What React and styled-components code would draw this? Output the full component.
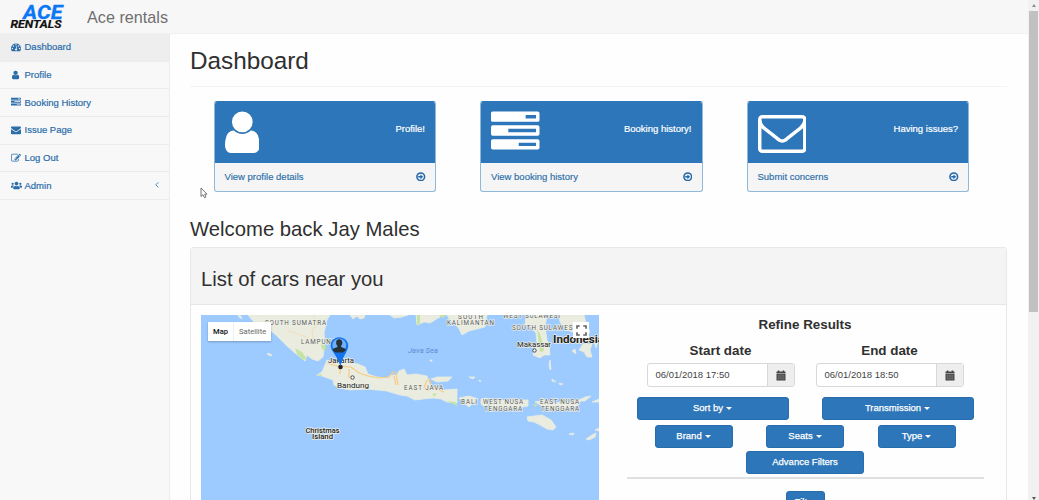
import React from "react";
import styled, { createGlobalStyle } from "styled-components";
import { FaUsers } from "react-icons/fa";

const Global = createGlobalStyle`
  * { box-sizing: border-box; }
  html, body { margin: 0; height: 100%; overflow: hidden; background: #fefefe; }
  body { font-family: "Liberation Sans", Arial, sans-serif; font-size: 9.5px; color: #333; }
  h1, h2, h3, h4, p { margin: 0; font-weight: 400; }
`;

const Window = styled.div`
  display: flex;
  width: 1039px;
  height: 500px;
  overflow: hidden;
`;
const Page = styled.div`
  flex: 1;
  min-width: 0;
  display: flex;
  flex-direction: column;
`;
const TopBar = styled.header`
  height: 34px;
  flex: none;
  display: flex;
  align-items: center;
  background: #f7f7f7;
  border-bottom: 1px solid #f1f1f1;
  padding-left: 10px;
`;
const Brand = styled.span`
  margin-left: 22px;
  font-size: 16.2px;
  line-height: 18px;
  color: #6f6f6f;
`;
const Body = styled.div`
  flex: 1;
  min-height: 0;
  display: flex;
`;
const Sidebar = styled.nav`
  width: 170px;
  flex: none;
  background: #f8f8f8;
  border-right: 1px solid #ececec;
`;
const NavItem = styled.a`
  display: flex;
  align-items: center;
  height: 27.7px;
  padding: 0 10px 1px 10.5px;
  border-bottom: 1px solid #ececec;
  background: ${(p) => (p.$active ? "#eee" : "transparent")};
  color: #2a6da9;
  -webkit-text-stroke: 0.2px #2a6da9;
`;
const NavIcon = styled.span`
  display: flex;
  justify-content: center;
  width: 11px;
  margin-right: 3px;
`;
const NavLabel = styled.span`
  flex: 1;
`;
const Main = styled.main`
  flex: 1;
  min-width: 0;
  padding: 0 21px 0 20px;
  background: #fefefe;
`;
const PageTitle = styled.h1`
  height: 53px;
  padding-top: 13px;
  border-bottom: 1px solid #f3f3f3;
  font-size: 24.3px;
  line-height: 28px;
  color: #303030;
`;
const Cards = styled.section`
  display: flex;
  gap: 44px;
  padding: 14px 0 0 23.5px;
`;
const Card = styled.article`
  width: 222.5px;
  height: 91px;
  border: 1px solid #8fb9da;
  border-top-color: #2d76b9;
  border-radius: 3px;
  overflow: hidden;
  background: #f5f5f5;
`;
const CardTop = styled.div`
  height: 61px;
  display: flex;
  justify-content: space-between;
  padding: 5.5px 10px 0;
  background: #2d76b9;
  color: #fff;
  -webkit-text-stroke: 0.2px #fff;
`;
const CardCaption = styled.span`
  padding-top: 15px;
  line-height: 12px;
`;
const CardLink = styled.a`
  display: flex;
  align-items: center;
  justify-content: space-between;
  height: 27px;
  padding: 0 9.5px 0 10px;
  color: #2a6da9;
  -webkit-text-stroke: 0.15px #2a6da9;
`;
const Welcome = styled.h2`
  padding-top: 25px;
  height: 55px;
  font-size: 20.3px;
  line-height: 24px;
  color: #303030;
`;
const Panel = styled.section`
  height: 300px;
  border: 1px solid #e8e8e8;
  border-radius: 3px 3px 0 0;
  background: #fefefe;
`;
const PanelHead = styled.div`
  height: 57px;
  padding: 19px 10px 0;
  background: #f4f4f4;
  border-bottom: 1px solid #e6e6e6;
`;
const PanelTitle = styled.h3`
  font-size: 20.3px;
  line-height: 24px;
  color: #303030;
`;
const PanelBody = styled.div`
  display: flex;
  padding: 10px 22px 0 10px;
`;
const MapFrame = styled.div`
  position: relative;
  width: 398px;
  height: 200px;
  flex: none;
  overflow: hidden;
`;
const MapTypes = styled.div`
  position: absolute;
  left: 7px;
  top: 7px;
  height: 19px;
  display: flex;
  align-items: center;
  background: #fff;
  box-shadow: 0 1px 2px rgba(0, 0, 0, 0.25);
  font-family: Roboto, sans-serif;
  font-size: 7.6px;
`;
const MapType = styled.span`
  padding: 4px 5px;
  line-height: 11px;
  color: ${(p) => (p.$on ? "#111" : "#666")};
  font-weight: ${(p) => (p.$on ? 500 : 400)};
  & + & { border-left: 1px solid #eee; }
`;
const FullScreen = styled.div`
  position: absolute;
  left: 372px;
  top: 7px;
  width: 16px;
  height: 16px;
  display: flex;
  align-items: center;
  justify-content: center;
  background: #fff;
`;
const Filters = styled.div`
  width: 357px;
  margin-left: 27.5px;
  display: flex;
  flex-direction: column;
`;
const FilterTitle = styled.h4`
  margin-top: 2px;
  text-align: center;
  font-size: 13.4px;
  line-height: 16px;
  font-weight: 700;
  color: #303030;
`;
const DateRow = styled.div`
  display: flex;
  gap: 21px;
  padding: 8px 0 0 20px;
`;
const DateField = styled.div`
  width: 148px;
`;
const DateInput = styled.div`
  display: flex;
  height: 24px;
  margin-top: 4px;
  border: 1px solid #d8d8d8;
  border-radius: 3px;
  background: #fff;
`;
const DateValue = styled.span`
  flex: 1;
  padding-left: 8px;
  line-height: 21px;
  font-size: 9.5px;
  color: #444;
`;
const DateAddon = styled.span`
  width: 27px;
  display: flex;
  align-items: center;
  justify-content: center;
  background: #eee;
  border-left: 1px solid #d8d8d8;
`;
const ButtonRow = styled.div`
  display: flex;
  justify-content: center;
  gap: ${(p) => p.$gap || 0}px;
  margin-top: ${(p) => p.$top}px;
`;
const Button = styled.button`
  width: ${(p) => p.$w}px;
  height: 23px;
  display: flex;
  align-items: center;
  justify-content: center;
  gap: 3px;
  padding: 0 0 2px;
  border: 1px solid #276cab;
  border-radius: 3px;
  background: #2d76b9;
  color: #fff;
  font: 9.5px "Liberation Sans", Arial, sans-serif;
  -webkit-text-stroke: 0.25px #fff;
`;
const Caret = styled.i`
  border: 3px solid transparent;
  border-top-color: #fff;
  border-bottom: 0;
  margin-top: 2px;
`;
const Rule = styled.div`
  height: 2px;
  margin: 3px 0 12px;
  background: #e0e0e0;
`;
const ScrollTrack = styled.div`
  width: 11px;
  flex: none;
  display: flex;
  flex-direction: column;
  align-items: center;
  background: #f1f1f1;
`;
const ScrollThumb = styled.div`
  width: 9px;
  height: 301px;
  margin: 4px 0 185px;
  background: #c1c1c1;
`;
const ScrollArrow = styled.i`
  border: 2.5px solid transparent;
  ${(p) => (p.$up ? "border-bottom: 3px solid #8b8b8b; border-top: 0; margin-top: 4px;" : "border-top: 3px solid #555; border-bottom: 0;")}
`;
const Pointer = styled.svg`
  position: absolute;
  left: 200px;
  top: 187px;
`;

const PATHS = {
  gauge: "M384 1152q0-53-37.5-90.5t-90.5-37.5-90.5 37.5-37.5 90.5 37.5 90.5 90.5 37.5 90.5-37.5 37.5-90.5zm192-448q0-53-37.5-90.5t-90.5-37.5-90.5 37.5-37.5 90.5 37.5 90.5 90.5 37.5 90.5-37.5 37.5-90.5zm428 481l101-382q6-26-7.5-48.5t-38.5-29.5-48 6.5-30 39.5l-101 382q-60 5-107 43.5t-63 98.5q-20 77 20 146t117 89 146-20 89-117q16-60-6-117t-72-91zm660-33q0-53-37.5-90.5t-90.5-37.5-90.5 37.5-37.5 90.5 37.5 90.5 90.5 37.5 90.5-37.5 37.5-90.5zm-640-640q0-53-37.5-90.5t-90.5-37.5-90.5 37.5-37.5 90.5 37.5 90.5 90.5 37.5 90.5-37.5 37.5-90.5zm448 192q0-53-37.5-90.5t-90.5-37.5-90.5 37.5-37.5 90.5 37.5 90.5 90.5 37.5 90.5-37.5 37.5-90.5zm320 448q0 261-141 483-19 29-54 29h-1402q-35 0-54-29-141-221-141-483 0-182 71-348t191-286 286-191 348-71 348 71 286 191 191 286 71 348z",
  user: "M1280 1399q0 109-62.5 187t-150.5 78h-854q-88 0-150.5-78t-62.5-187q0-85 8.5-160.5t31.5-152 58.5-131 94-89 134.5-34.5q131 128 313 128t313-128q76 0 134.5 34.5t94 89 58.5 131 31.5 152 8.5 160.5zm-256-887q0 159-112.5 271.5t-271.5 112.5-271.5-112.5-112.5-271.5 112.5-271.5 271.5-112.5 271.5 112.5 112.5 271.5z",
  tasks: "M64 128h1664q64 0 64 64v256q0 64-64 64H64q-64 0-64-64V192q0-64 64-64zM1280 256v128h384V256zM64 640h1664q64 0 64 64v256q0 64-64 64H64q-64 0-64-64V704q0-64 64-64zM640 768v128h1024V768zM64 1152h1664q64 0 64 64v256q0 64-64 64H64q-64 0-64-64v-256q0-64 64-64zM1024 1280v128h640v-128z",
  mail: "M1792 710v794q0 66-47 113t-113 47h-1472q-66 0-113-47t-47-113v-794q44 49 101 87 362 246 497 345 57 42 92.5 65.5t94.5 48 110 24.5h2q51 0 110-24.5t94.5-48 92.5-65.5q170-123 498-345 57-39 100-87zm0-294q0 79-49 151t-122 123q-376 261-468 325-10 7-42.5 31t-54 38.5-52 32.5-57.5 27-50 9h-2q-23 0-50-9t-57.5-27-52-32.5-54-38.5-42.5-31q-91-64-262-182.5t-205-142.5q-62-42-117-115.5t-55-136.5q0-78 41.5-130t118.5-52h1472q65 0 112.5 47t47.5 113z",
  mailOpen: "M1664 1504v-768q-32 36-69 66-268 206-426 338-51 43-83 67t-86.5 48.5-102.5 24.5h-2q-48 0-102.5-24.5t-86.5-48.5-83-67q-158-132-426-338-37-30-69-66v768q0 13 9.5 22.5t22.5 9.5h1472q13 0 22.5-9.5t9.5-22.5zm0-1051v-24.5l-.5-13-3-12.5-5.5-9-9-7.5-14-2.5h-1472q-13 0-22.5 9.5t-9.5 22.5q0 168 147 284 193 152 401 317 6 5 35 29.5t46 37.5 44.5 31.5 50.5 27.5 43 9h2q20 0 43-9t50.5-27.5 44.5-31.5 46-37.5 35-29.5q208-165 401-317 54-43 100.5-115.5t46.5-131.5zm128-37v1088q0 66-47 113t-113 47h-1472q-66 0-113-47t-47-113v-1088q0-66 47-113t113-47h1472q66 0 113 47t47 113z",
  edit: "M888 1184l116-116-152-152-116 116v56h96v96h56zm440-720q-16-16-33 1l-350 350q-17 17-1 33t33-1l350-350q17-17 1-33zm80 594v190q0 119-84.5 203.5t-203.5 84.5h-832q-119 0-203.5-84.5t-84.5-203.5v-832q0-119 84.5-203.5t203.5-84.5h832q63 0 117 25 15 7 18 23 3 17-9 29l-49 49q-14 14-32 8-23-6-45-6h-832q-66 0-113 47t-47 113v832q0 66 47 113t113 47h832q66 0 113-47t47-113v-126q0-13 9-22l64-64q15-15 35-7t20 29zm-96-738l288 288-672 672h-288v-288zm444 132l-92 92-288-288 92-92q28-28 68-28t68 28l152 152q28 28 28 68t-28 68z",
};

const Icon = ({ name, size }) => {
  const w = name === "user" ? 1280 : 1792;
  return (
    <svg width={(size * w) / 1792} height={size} viewBox={`0 0 ${w} 1792`} fill="currentColor" fillRule="evenodd">
      <path d={PATHS[name]} />
    </svg>
  );
};

const ArrowCircle = () => (
  <svg width="9.5" height="9.5" viewBox="0 0 18 18" fill="none" stroke="#2468a8">
    <circle cx="9" cy="9" r="7.3" strokeWidth="2.9" />
    <path d="M4.2 9h5.3" strokeWidth="3.2" />
    <path d="M8.3 4.5L13.6 9l-5.3 4.5z" fill="#2468a8" stroke="none" />
  </svg>
);

const Calendar = () => (
  <svg width="10" height="11" viewBox="0 0 10 11">
    <path d="M.5 1.5h1.3V.4h1.6v1.1h3.2V.4h1.6v1.1h1.3v2H.5zM.5 4h9v6.5h-9z" fill="#444" />
    <path d="M.5 6h9M.5 8.2h9M2.9 4v6.5M5 4v6.5M7.1 4v6.5" stroke="#999" strokeWidth=".4" />
  </svg>
);

const Logo = () => (
  <svg width="55" height="30" viewBox="0 0 55 30" overflow="visible" fontFamily="Roboto, sans-serif" fontWeight="700" fontStyle="italic">
    <text x="13" y="17" fontSize="20" fill="#0a78f5" stroke="#0a78f5" strokeWidth=".3" textLength="39.5" lengthAdjust="spacingAndGlyphs">ACE</text>
    <text x="0.5" y="26.2" fontSize="11.2" fill="#111" stroke="#111" strokeWidth=".2" textLength="51" lengthAdjust="spacingAndGlyphs">RENTALS</text>
  </svg>
);

const LAND = [
  "M47 0L52 6 57 11 69 15 76 21 86 31 94 38 104 46 106 40 111 44 117 46 122 42 123 35 124 28 123 18 126 5 129 0z",
  "M116 60L121 57 126 45 132 47 137 46 141 42 149 48 157 49 164 52 167 59 176 62 186 63 190 60 196 60 198 56 203 54 206 60 215 59 226 61 228 68 231 72 242 75 256 74 256 88 246 87 240 84 232 83 222 84 214 85 206 81 199 80 189 77 186 76 176 75 166 74 149 75 139 73 133 70 132 65 121 61z",
  "M230 64L236 62 251 62 247 66 236 67z",
  "M258 83L268 81 277 84 272 88 268 92 263 88z",
  "M280 84L286 83 288 88 284 92 280 89z",
  "M289 88L296 84 305 86 312 84 320 85 327 85 327 91 317 93 308 92 298 94 290 92z",
  "M334 87L343 85 352 88 361 87 370 87 378 85 382 83 376 91 366 93 354 94 343 92z",
  "M378 86L384 82 390 81 384 86zM391 87L398 84 398 87z",
  "M326 102L333 101 341 100 350 105 355 112 352 115 346 114 339 110 333 107 327 106z",
  "M385 124L391 120 395 118 394 122 388 125zM394 115L398 113 398 116zM368 119L373 118 372 120z",
  "M246 0L250 7 257 12 261 20 268 16 284 12 286 0z",
  "M215 0L216 10 223 7 229 8 239 2 239 0zM189 0L193 3 201 2 207 0z",
  "M325 0L324 10 330 12 335 18 336 28 333 35 332 40 339 43 343 40 349 40 348 31 346 25 344 12 346 0z",
  "M358 0L359 7 366 15 372 17 375 25 381 27 389 17 385 8 383 0z",
  "M378 35L382 29 391 29 389 35 391 42 386 42 383 37zM371 36l3-2 1 5zM393 26l4-1-2 8z",
  "M349 45l1 9-1 1-1-5zM351 64l4 3-4-1zM268 62l6 0-2 2zM278 65l2 1-1 1zM229 45h2v1h-2zM358 68l4 1-3 1zM67 38l4 2-1 1-4-2zM37 0l3 1 1 3-3-2zM149 0l3 4 4-3 3 3 4-1 1-3z",
];

const LABELS = [
  { x: 64, y: 9.3, t: "SOUTH SUMATRA", w: 61, s: 6.3 },
  { x: 100, y: 28.3, t: "LAMPUNG", w: 35, s: 6.3 },
  { x: 203, y: 74.4, t: "EAST JAVA", w: 39, s: 6.3 },
  { x: 257, y: 3, t: "SOUTH", w: 25, s: 6.3 },
  { x: 246, y: 9.2, t: "KALIMANTAN", w: 47, s: 6.3 },
  { x: 302, y: 2.6, t: "WEST SULAWESI", w: 57, s: 6.3 },
  { x: 311, y: 14.7, t: "SOUTH SULAWESI", w: 63, s: 6.3 },
  { x: 260, y: 88, t: "BALI", w: 16, s: 6.3 },
  { x: 282, y: 88.5, t: "WEST NUSA", w: 40, s: 6.3 },
  { x: 283, y: 95, t: "TENGGARA", w: 38, s: 6.3 },
  { x: 339, y: 88.5, t: "EAST NUSA", w: 39, s: 6.3 },
  { x: 340, y: 95, t: "TENGGARA", w: 38, s: 6.3 },
  { x: 127, y: 47.2, t: "Jakarta", w: 26, s: 7.8, c: "#222" },
  { x: 136, y: 72.3, t: "Bandung", w: 32, s: 7.8, c: "#222" },
  { x: 316, y: 31, t: "Makassar", w: 34, s: 7.8, c: "#222" },
  { x: 104.5, y: 117, t: "Christmas", w: 34, s: 7.2, c: "#222", b: 500 },
  { x: 111, y: 123.6, t: "Island", w: 21, s: 7.2, c: "#222", b: 500 },
  { x: 352, y: 27, t: "Indonesia", w: 51, s: 11.2, c: "#222", b: 700 },
];

const MapDrawing = () => (
  <svg width="398" height="200" viewBox="0 0 398 200" display="block" fontFamily="Roboto, sans-serif">
    <rect width="398" height="200" fill="#9dcaff" />
    <g fill="#e9ecdf" stroke="#e9ecdf" strokeWidth=".8" strokeLinejoin="round">
      {LAND.map((d) => <path key={d} d={d} />)}
    </g>
    <g fill="#c5e3a2">
      <path d="M94 33l7 4 5 7-4 1-6-6zM120 29l5 1-1 6-3-2zM216 0h3v9l-3 1zM238 0h7l-3 3zM336 14l3 5 3 11 1 6-4 1-1-8zM231 79l4-1-1 4zM246 86l8 1 3 4-5-2zM332 89l5 1-3 2zM115 60l5-1 1 2z" />
    </g>
    <g fill="none" stroke="#f8cb82" strokeWidth="1.2">
      <path d="M126 48l10 3 14 1 8 6 9 3 12 2 9-1 4-5 3 1 2 12M139 51v8M148 54v9M193 61l2 9M228 63l3 9 12 5M226 65l-3 8 5 3" />
      <path d="M112 0l4 8-5 8 2 14M86 15l22 8" strokeWidth=".7" opacity=".6" />
    </g>
    <g stroke="#eef0e8" strokeWidth="1.4" strokeLinejoin="round" paintOrder="stroke" transform="translate(0 .5)">
      {LABELS.map((l, i) => (
        <text key={i} x={l.x} y={l.y} fontSize={l.s} fontWeight={l.b || 400} fill={l.c || "#5c5c5c"} textLength={l.w} lengthAdjust={l.c ? "spacingAndGlyphs" : "spacing"}>{l.t}</text>
      ))}
    </g>
    <text x="207" y="37.5" fontSize="7.6" fontStyle="italic" fill="#5b8fd6" textLength="30">Java Sea</text>
    <g fill="#fff" stroke="#444" strokeWidth="1">
      <circle cx="151.5" cy="62.5" r="1.7" />
      <circle cx="333.5" cy="35.5" r="1.7" />
    </g>
    <circle cx="139.5" cy="52" r="2.3" fill="#222" />
    <path d="M138.2 22.3c-5 0-8.6 3.6-8.6 8.3 0 5.6 6.4 9.2 9.8 20.7 3-11.5 7.800-15.100 7.800-20.700 0-4.700-4-8.300-9-8.300z" fill="#1373ef" />
    <circle cx="138.3" cy="30.3" r="6.9" fill="#72aff8" />
    <path d="M138.200 24.300c2 0 3.200 1.500 3.100 3.500 0 1.300-.6 2.200-1.200 3v1.200l3.800 1.600c.7.400.9 1 .8 1.600l-2.600 2.200h-7.800l-2.600-2.200c0-.8.200-1.300.9-1.600l3.800-1.600v-1.200c-.7-.8-1.300-1.700-1.300-3 0-2 1-3.500 3.100-3.500z" fill="#263238" />
  </svg>
);

const NAV = [
  ["gauge", "Dashboard"],
  ["user", "Profile"],
  ["tasks", "Booking History"],
  ["mail", "Issue Page"],
  ["edit", "Log Out"],
  ["users", "Admin"],
];
const CARDS = [
  ["user", "Profile!", "View profile details"],
  ["tasks", "Booking history!", "View booking history"],
  ["mailOpen", "Having issues?", "Submit concerns"],
];
const DATES = [
  ["Start date", "06/01/2018 17:50"],
  ["End date", "06/01/2018 18:50"],
];

export default function App() {
  return (
    <Window>
      <Global />
      <Page>
        <TopBar>
          <Logo />
          <Brand>Ace rentals</Brand>
        </TopBar>
        <Body>
          <Sidebar>
            {NAV.map(([icon, label], i) => (
              <NavItem key={label} $active={i === 0}>
                <NavIcon>{icon === "users" ? <FaUsers size={11} /> : <Icon name={icon} size={10} />}</NavIcon>
                <NavLabel>{label}</NavLabel>
                {icon === "users" && (
                  <svg width="4" height="7" viewBox="0 0 4 7" fill="none" stroke="#4a86bd"><path d="M3.3 .3L.8 2.8 3.3 5.3" /></svg>
                )}
              </NavItem>
            ))}
          </Sidebar>
          <Main>
            <PageTitle>Dashboard</PageTitle>
            <Cards>
              {CARDS.map(([icon, caption, link]) => (
                <Card key={icon}>
                  <CardTop>
                    <Icon name={icon} size={48.5} />
                    <CardCaption>{caption}</CardCaption>
                  </CardTop>
                  <CardLink>{link}<ArrowCircle /></CardLink>
                </Card>
              ))}
            </Cards>
            <Welcome>Welcome back Jay Males</Welcome>
            <Panel>
              <PanelHead><PanelTitle>List of cars near you</PanelTitle></PanelHead>
              <PanelBody>
                <MapFrame>
                  <MapDrawing />
                  <MapTypes>
                    <MapType $on>Map</MapType>
                    <MapType>Satellite</MapType>
                  </MapTypes>
                  <FullScreen>
                    <svg width="11" height="11" viewBox="0 0 11 11" fill="none" stroke="#666" strokeWidth="1.7">
                      <path d="M1 3.8V1h2.8M7.2 1H10v2.8M10 7.2V10H7.2M3.8 10H1V7.2" />
                    </svg>
                  </FullScreen>
                </MapFrame>
                <Filters>
                  <FilterTitle>Refine Results</FilterTitle>
                  <DateRow>
                    {DATES.map(([label, value]) => (
                      <DateField key={label}>
                        <FilterTitle>{label}</FilterTitle>
                        <DateInput>
                          <DateValue>{value}</DateValue>
                          <DateAddon><Calendar /></DateAddon>
                        </DateInput>
                      </DateField>
                    ))}
                  </DateRow>
                  <ButtonRow $top={9.5} $gap={33}>
                    <Button $w={152}>Sort by<Caret /></Button>
                    <Button $w={152}>Transmission<Caret /></Button>
                  </ButtonRow>
                  <ButtonRow $top={5.5} $gap={33.5}>
                    <Button $w={78}>Brand<Caret /></Button>
                    <Button $w={78}>Seats<Caret /></Button>
                    <Button $w={78}>Type<Caret /></Button>
                  </ButtonRow>
                  <ButtonRow $top={3}>
                    <Button $w={118}>Advance Filters</Button>
                  </ButtonRow>
                  <Rule />
                  <ButtonRow $top={0}>
                    <Button $w={39}>Filter</Button>
                  </ButtonRow>
                </Filters>
              </PanelBody>
            </Panel>
          </Main>
        </Body>
      </Page>
      <ScrollTrack>
        <ScrollArrow $up />
        <ScrollThumb />
        <ScrollArrow />
      </ScrollTrack>
      <Pointer width="8" height="12" viewBox="0 0 8 12">
        <path d="M1 1v8.5l2-1.8 1.5 3 1.5-.7L4.7 7.2H7z" fill="#fff" stroke="#666" strokeWidth=".9" />
      </Pointer>
    </Window>
  );
}
